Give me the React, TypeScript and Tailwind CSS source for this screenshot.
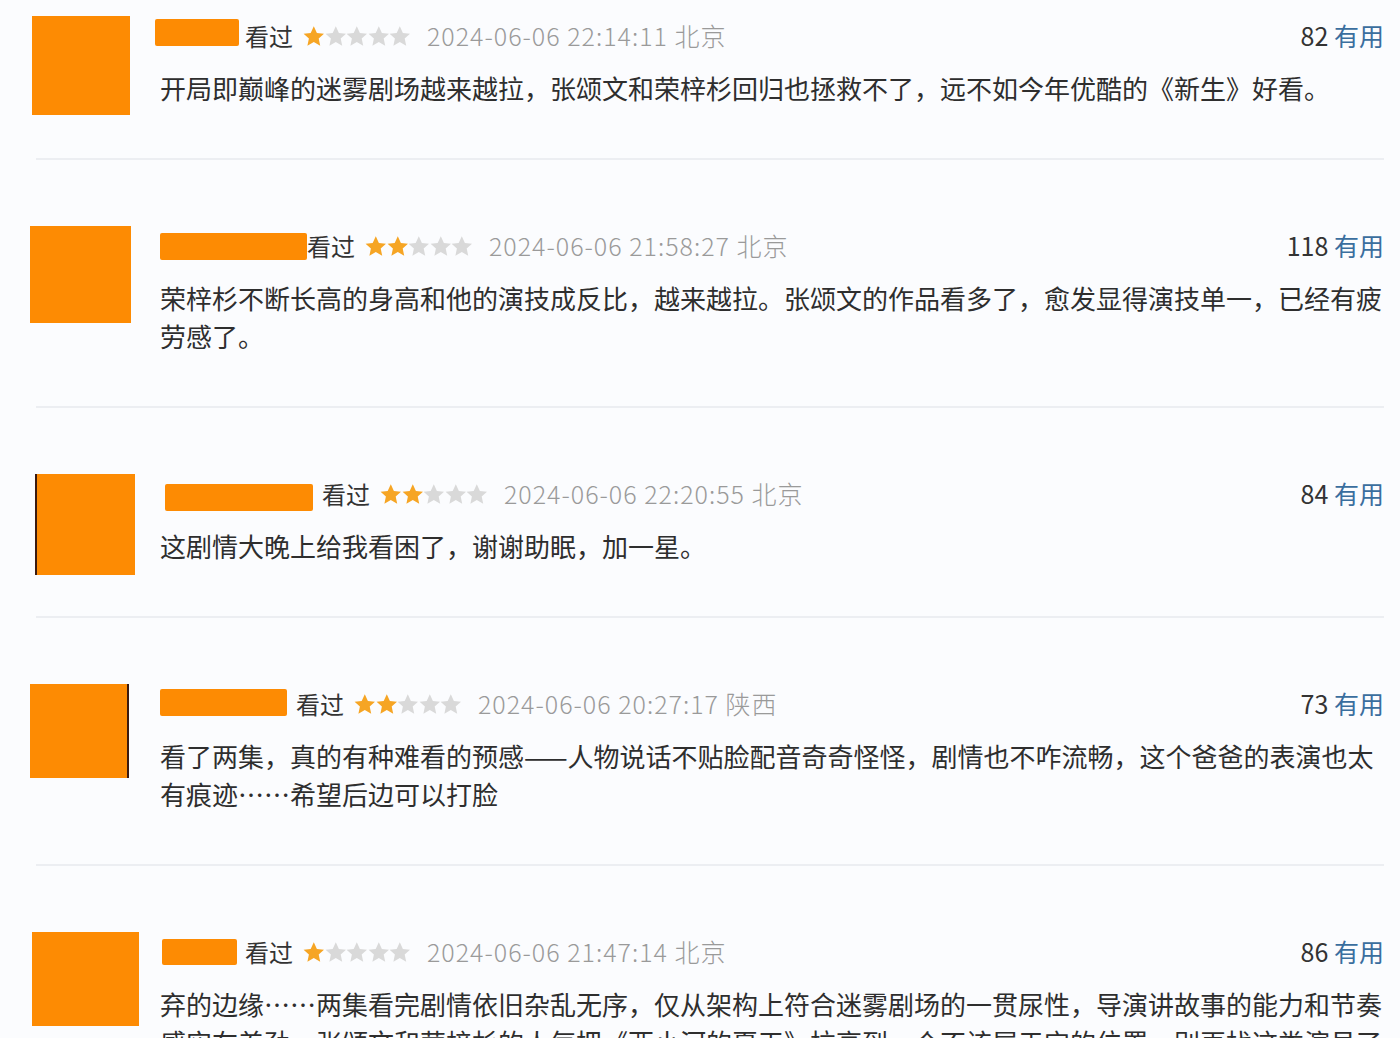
import React from "react";

type Review = {
  stars: number;
  useful: number;
  date: string;
  place: string;
  lines: string[];
  avatar: string;
  nameBox: string;
  seenGap: string;
};

const reviews: Review[] = [
  {
    stars: 1,
    useful: 82,
    date: "2024-06-06 22:14:11",
    place: "北京",
    lines: ["开局即巅峰的迷雾剧场越来越拉，张颂文和荣梓杉回归也拯救不了，远不如今年优酷的《新生》好看。"],
    avatar: "ml-[32px] w-[98px] h-[99px]",
    nameBox: "ml-[-5px] w-[84px] h-[27px] -translate-y-[4px]",
    seenGap: "ml-[6px]",
  },
  {
    stars: 2,
    useful: 118,
    date: "2024-06-06 21:58:27",
    place: "北京",
    lines: [
      "荣梓杉不断长高的身高和他的演技成反比，越来越拉。张颂文的作品看多了，愈发显得演技单一，已经有疲",
      "劳感了。",
    ],
    avatar: "ml-[30px] w-[101px] h-[97px]",
    nameBox: "ml-[0px] w-[147px] h-[27px]",
    seenGap: "ml-[0px]",
  },
  {
    stars: 2,
    useful: 84,
    date: "2024-06-06 22:20:55",
    place: "北京",
    lines: ["这剧情大晚上给我看困了，谢谢助眠，加一星。"],
    avatar: "ml-[35px] w-[100px] h-[101px] border-l-2 border-[#3a1a10]",
    nameBox: "ml-[5px] w-[148px] h-[27px] translate-y-[3px]",
    seenGap: "ml-[9px]",
  },
  {
    stars: 2,
    useful: 73,
    date: "2024-06-06 20:27:17",
    place: "陕西",
    lines: [
      "看了两集，真的有种难看的预感——人物说话不贴脸配音奇奇怪怪，剧情也不咋流畅，这个爸爸的表演也太",
      "有痕迹……希望后边可以打脸",
    ],
    avatar: "ml-[30px] w-[99px] h-[94px] border-r-2 border-[#3a1a10]",
    nameBox: "ml-[0px] w-[127px] h-[27px] -translate-y-[2px]",
    seenGap: "ml-[9px]",
  },
  {
    stars: 1,
    useful: 86,
    date: "2024-06-06 21:47:14",
    place: "北京",
    lines: [
      "弃的边缘……两集看完剧情依旧杂乱无序，仅从架构上符合迷雾剧场的一贯尿性，导演讲故事的能力和节奏",
      "感实在差劲，张颂文和荣梓杉的人气把《西小河的夏天》拉高到一个不该属于它的位置，别再找这类演员了",
    ],
    avatar: "ml-[32px] w-[107px] h-[94px]",
    nameBox: "ml-[2px] w-[75px] h-[26px]",
    seenGap: "ml-[8px]",
  },
];

function Star({ on }: { on: boolean }) {
  return (
    <svg width="21.6" height="21" viewBox="1.5 1.5 21 21">
      <path
        d="M12 1.8l3.1 6.6 7.1.8-5.3 4.9 1.5 7.1L12 17.6l-6.4 3.6 1.5-7.1L1.8 9.2l7.1-.8z"
        fill={on ? "#f6a524" : "#d9d9d9"}
      />
    </svg>
  );
}

function Row({ r, first }: { r: Review; first: boolean }) {
  return (
    <div className={first ? "pt-4" : "pt-[66px]"}>
      <div className="flex">
        {/* avatar hangs below a short column so the text sets the row height */}
        <div className="w-[160px] h-[80px] shrink-0">
          <div className={`bg-[#fd8b03] ${r.avatar}`} />
        </div>
        <div className="flex-1 pr-4 min-w-0">
          <div className="flex items-center h-[40px] text-[24px] text-[#333]">
            <div className={`bg-[#fd8b03] rounded-[2px] ${r.nameBox}`} />
            <span className={r.seenGap}>看过</span>
            <span className="ml-[10px] flex items-center">
              {[0, 1, 2, 3, 4].map((i) => (
                <Star key={i} on={i < r.stars} />
              ))}
            </span>
            <span className="ml-[16px] text-[25px] text-[#9a9a9a] font-light tracking-[1px]">
              {r.date} {r.place}
            </span>
            <span className="ml-auto text-[25px]">
              <span className="text-[#333]">{r.useful}</span>{" "}
              <span className="text-[#3a6e9e]">有用</span>
            </span>
          </div>
          <div className="mt-[13px] text-[26px] leading-[38px] text-[#2e2e2e] whitespace-nowrap">
            {r.lines.map((l, i) => (
              <div key={i}>{l}</div>
            ))}
          </div>
        </div>
      </div>
      <div className="mt-[51px] ml-[36px] mr-4 h-[2px] bg-[#eceef2]" />
    </div>
  );
}

export default function App() {
  return (
    <div
      className="w-[1400px] h-[1038px] overflow-hidden bg-[#fbfcfe]"
      style={{ fontFamily: '"Noto Sans CJK SC", "Noto Sans", sans-serif' }}
    >
      {reviews.map((r, i) => (
        <Row key={i} r={r} first={i === 0} />
      ))}
    </div>
  );
}
